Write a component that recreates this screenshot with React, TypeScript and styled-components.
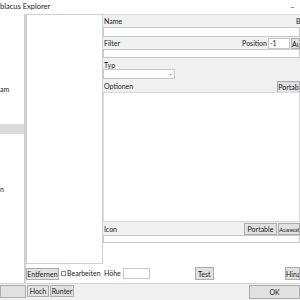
import styled, { createGlobalStyle } from "styled-components";

const GlobalStyle = createGlobalStyle`
  html, body {
    margin: 0;
    padding: 0;
    background: #ffffff;
  }
  body {
    font-family: Lato, "Liberation Sans", sans-serif;
    font-size: 7px;
    color: #1a1a1a;
  }
`;

const leftItems: { text: string; selected?: boolean }[] = Array.from(
  { length: 27 },
  (_, i) => {
    if (i === 7) return { text: "am" };
    if (i === 11) return { text: "", selected: true };
    if (i === 17) return { text: "n" };
    return { text: "" };
  }
);

export default function App() {
  return (
    <>
      <GlobalStyle />
      <Window>
        <TitleBar>
          <TitleText>blacus Explorer</TitleText>
          <Minimize>–</Minimize>
        </TitleBar>
        <Body>
          <LeftList>
            {leftItems.map((item, i) => (
              <LeftItem key={i} selected={item.selected}>
                {item.text}
              </LeftItem>
            ))}
          </LeftList>
          <Splitter />
          <Main>
            <Upper>
              <MiddleList />
              <Form>
                <Band h={12}>
                  <Label>Name</Label>
                  <Spacer />
                  <EdgeLabel>B</EdgeLabel>
                </Band>
                <Input h={10} />
                <Band h={12}>
                  <Label>Filter</Label>
                  <Spacer />
                  <Label>Position</Label>
                  <SmallInput w={22}>-1</SmallInput>
                  <Button w={9} h={11}>
                    Au
                  </Button>
                </Band>
                <Input h={9} />
                <TypBlock>
                  <Label>Typ</Label>
                  <Select>
                    <Arrow>⌄</Arrow>
                  </Select>
                </TypBlock>
                <Band h={12}>
                  <Label>Optionen</Label>
                  <Spacer />
                  <Button w={23} h={12}>
                    Portab
                  </Button>
                </Band>
                <OptionsArea />
                <Band h={13}>
                  <Label>Icon</Label>
                  <Spacer />
                  <Button w={33} h={12}>
                    Portable
                  </Button>
                  <Button w={22} h={12} fs={6.3}>
                    Auswah
                  </Button>
                </Band>
                <Input h={8} />
              </Form>
            </Upper>
            <Lower>
              <ListActions>
                <Button w={33} h={12}>
                  Entfernen
                </Button>
                <Check />
                <Label>Bearbeiten</Label>
              </ListActions>
              <FormActions>
                <Label>Höhe</Label>
                <SmallInput w={27} />
                <Gap w={41} />
                <Button w={19} h={13}>
                  Test
                </Button>
                <Spacer />
                <Button w={15} h={13}>
                  Hinz
                </Button>
              </FormActions>
            </Lower>
          </Main>
        </Body>
        <Footer>
          <Button w={26} h={13} />
          <Button w={22} h={12}>
            Hoch
          </Button>
          <Button w={24} h={12}>
            Runter
          </Button>
          <Spacer />
          <Button w={51} h={14}>
            OK
          </Button>
        </Footer>
      </Window>
    </>
  );
}

const Window = styled.div`
  width: 300px;
  height: 300px;
  overflow: hidden;
  display: flex;
  flex-direction: column;
  background: #ffffff;
`;

const TitleBar = styled.div`
  height: 14px;
  flex: none;
  display: flex;
  align-items: center;
  background: #ffffff;
`;

const TitleText = styled.span`
  font-size: 7.5px;
  margin-top: -1px;
  flex: 1;
`;

const Minimize = styled.span`
  width: 10px;
  font-size: 8px;
  margin-top: -1px;
`;

const Body = styled.div`
  height: 269px;
  flex: none;
  display: flex;
`;

const LeftList = styled.div`
  width: 24px;
  flex: none;
  overflow: hidden;
  background: #ffffff;
`;

const LeftItem = styled.div<{ selected?: boolean }>`
  height: 10px;
  line-height: 10px;
  white-space: nowrap;
  color: #1a1a1a;
  background: ${(p) => (p.selected ? "#dcdcdc" : "transparent")};
`;

const Splitter = styled.div`
  width: 2px;
  flex: none;
  background: #cfcfcf;
`;

const Main = styled.div`
  flex: 1;
  min-width: 0;
  display: flex;
  flex-direction: column;
`;

const Upper = styled.div`
  height: 250px;
  flex: none;
  display: flex;
`;

const MiddleList = styled.div`
  width: 77px;
  flex: none;
  box-sizing: border-box;
  border: 1px solid #d0d0d0;
  background: #ffffff;
`;

const Form = styled.div`
  flex: 1;
  min-width: 0;
  display: flex;
  flex-direction: column;
  overflow: hidden;
  border-top: 1px solid #d9d9d9;
`;

const Band = styled.div<{ h: number }>`
  height: ${(p) => p.h}px;
  flex: none;
  display: flex;
  align-items: center;
  gap: 1px;
  background: #f0f0f0;
  padding-left: 1px;
  box-sizing: border-box;
  padding-top: 1px;
`;

const Label = styled.span`
  white-space: nowrap;
  line-height: 1;
`;

const EdgeLabel = styled.span`
  width: 4px;
  overflow: hidden;
  margin-bottom: 2px;
`;

const Spacer = styled.div`
  flex: 1;
`;

const Gap = styled.div<{ w: number }>`
  width: ${(p) => p.w}px;
  flex: none;
`;

const Input = styled.div<{ h: number }>`
  height: ${(p) => p.h}px;
  flex: none;
  box-sizing: border-box;
  border: 1px solid #c8c8c8;
  background: #ffffff;
`;

const SmallInput = styled.div<{ w: number }>`
  width: ${(p) => p.w}px;
  height: 11px;
  flex: none;
  box-sizing: border-box;
  border: 1px solid #c8c8c8;
  background: #ffffff;
  line-height: 9px;
  padding-left: 1px;
`;

const TypBlock = styled.div`
  height: 22px;
  flex: none;
  background: #f0f0f0;
  display: flex;
  flex-direction: column;
  justify-content: space-between;
  padding: 4px 0 1px 1px;
  box-sizing: border-box;
`;

const Select = styled.div`
  width: 72px;
  height: 11px;
  margin-left: -1px;
  box-sizing: border-box;
  border: 1px solid #c8c8c8;
  background: #ffffff;
  display: flex;
  justify-content: flex-end;
  align-items: center;
`;

const Arrow = styled.span`
  font-size: 6px;
  color: #555555;
  margin-right: 1px;
  margin-top: -3px;
`;

const OptionsArea = styled.div`
  height: 130px;
  flex: none;
  box-sizing: border-box;
  border: 1px solid #d9d9d9;
  background: #ffffff;
`;

const Button = styled.button<{ w: number; h: number; fs?: number }>`
  width: ${(p) => p.w}px;
  height: ${(p) => p.h}px;
  flex: none;
  padding: 0;
  box-sizing: border-box;
  border: 1px solid #adadad;
  background: #e1e1e1;
  font-family: inherit;
  font-size: ${(p) => p.fs ?? 7}px;
  color: #1a1a1a;
  overflow: hidden;
  white-space: nowrap;
  text-align: center;
`;

const Lower = styled.div`
  height: 19px;
  flex: none;
  display: flex;
  align-items: center;
`;

const ListActions = styled.div`
  width: 77px;
  flex: none;
  display: flex;
  align-items: center;
  gap: 1px;
`;

const Check = styled.div`
  width: 3px;
  height: 3px;
  border: 1px solid #8a8a8a;
  background: #ffffff;
  margin-left: 1px;
`;

const FormActions = styled.div`
  flex: 1;
  display: flex;
  align-items: center;
  gap: 2px;
  padding-left: 1px;
`;

const Footer = styled.div`
  flex: 1;
  display: flex;
  align-items: flex-start;
  gap: 1px;
  background: #f0f0f0;
  border-top: 1px solid #d6d6d6;
  padding-top: 1px;
`;
